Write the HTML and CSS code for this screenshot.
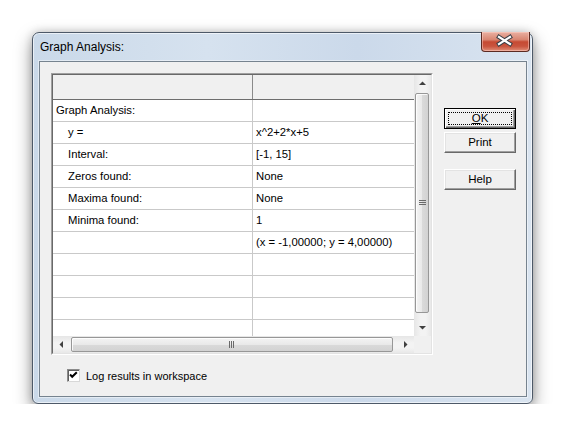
FILE: index.html
```html
<!DOCTYPE html>
<html>
<head>
<meta charset="utf-8">
<link rel="stylesheet" href="styles.css">
</head>
<body>
<div class="window">
  <div class="titlebar">
    <div class="title">Graph Analysis:</div>
    <div class="close">
      <svg width="49" height="20" viewBox="0 0 49 20">
        <path d="M18 6 L29 13 M29 6 L18 13" stroke="#3a3f46" stroke-width="4.2" stroke-linecap="square"/>
        <path d="M18 6 L29 13 M29 6 L18 13" stroke="#ffffff" stroke-width="2.2" stroke-linecap="square"/>
      </svg>
    </div>
  </div>
  <div class="client">
    <div class="listview">
      <div class="lv-inner">
        <div class="lv-body">
          <div class="hdr">
            <div class="hcell first"></div>
            <div class="hcell"></div>
          </div>
          <div class="row"><div class="cell c1">Graph Analysis:</div><div class="cell c2"></div></div>
          <div class="row"><div class="cell c1 ind">y =</div><div class="cell c2">x^2+2*x+5</div></div>
          <div class="row"><div class="cell c1 ind">Interval:</div><div class="cell c2">[-1, 15]</div></div>
          <div class="row"><div class="cell c1 ind">Zeros found:</div><div class="cell c2">None</div></div>
          <div class="row"><div class="cell c1 ind">Maxima found:</div><div class="cell c2">None</div></div>
          <div class="row"><div class="cell c1 ind">Minima found:</div><div class="cell c2">1</div></div>
          <div class="row"><div class="cell c1 ind"></div><div class="cell c2">(x = -1,00000; y = 4,00000)</div></div>
          <div class="row"><div class="cell c1"></div><div class="cell c2"></div></div>
          <div class="row"><div class="cell c1"></div><div class="cell c2"></div></div>
          <div class="row"><div class="cell c1"></div><div class="cell c2"></div></div>
          <div class="row"><div class="cell c1"></div><div class="cell c2"></div></div>
        </div>
        <div class="vscroll">
          <div class="arrow"><svg width="17" height="17" viewBox="0 0 17 17"><path d="M5 10 L12 10 L8.5 6.5 Z" fill="#404040"/></svg></div>
          <div class="vthumb">
            <svg width="7" height="6" viewBox="0 0 7 6"><path d="M0 0.5 H7 M0 2.5 H7 M0 4.5 H7" stroke="#6a6a6a" stroke-width="1"/></svg>
          </div>
          <div class="spacer"></div>
          <div class="arrow"><svg width="17" height="17" viewBox="0 0 17 17"><path d="M5 7 L12 7 L8.5 10.5 Z" fill="#404040"/></svg></div>
        </div>
        <div class="hscroll">
          <div class="arrow"><svg width="17" height="17" viewBox="0 0 17 17"><path d="M10 5 L10 12 L6.5 8.5 Z" fill="#404040"/></svg></div>
          <div class="hthumb">
            <svg width="6" height="7" viewBox="0 0 6 7"><path d="M0.5 0 V7 M2.5 0 V7 M4.5 0 V7" stroke="#6a6a6a" stroke-width="1"/></svg>
          </div>
          <div class="spacer"></div>
          <div class="arrow"><svg width="17" height="17" viewBox="0 0 17 17"><path d="M7 5 L7 12 L10.5 8.5 Z" fill="#404040"/></svg></div>
        </div>
        <div class="corner"></div>
      </div>
    </div>
    <div class="buttons">
      <div class="btn default"><span class="ul">O</span>K</div>
      <div class="btn print">Print</div>
      <div class="btn help">Help</div>
    </div>
    <div class="checkrow">
      <div class="checkbox">
        <svg width="11" height="11" viewBox="0 0 11 11"><path d="M2 4.5 L4.2 6.8 L8.8 2.2" fill="none" stroke="#000" stroke-width="2"/></svg>
      </div>
      <span>Log results in workspace</span>
    </div>
  </div>
</div>
</body>
</html>
```

FILE: styles.css
```css
* { box-sizing: border-box; }

body {
  margin: 0;
  background: #ffffff;
  font-family: "Liberation Sans", Arial, sans-serif;
  font-size: 11px;
  color: #000;
}

.window {
  margin: 32px 0 0 32px;
  width: 501px;
  height: 372px;
  display: flex;
  flex-direction: column;
  padding: 0 5px 6px 6px;
  border: 1px solid #4d5968;
  border-radius: 7px 7px 6px 6px;
  background: linear-gradient(90deg, #cad9e9 0%, #d6e2ef 35%, #cbd9ea 65%, #d9e4f0 100%);
  box-shadow: inset 0 0 0 1px rgba(255, 255, 255, 0.6), 0 7px 18px rgba(0, 0, 0, 0.4), 0 0 8px rgba(0, 0, 0, 0.18);
}

.titlebar {
  height: 28px;
  display: flex;
  justify-content: space-between;
  align-items: flex-start;
}

.title {
  font-size: 12px;
  line-height: 15px;
  padding: 7px 0 0 1px;
  color: #000;
}

.close {
  width: 49px;
  height: 20px;
  margin-top: -1px;
  margin-right: -3px;
  border: 1px solid #5b2a22;
  border-top: none;
  border-radius: 0 0 4px 4px;
  background: linear-gradient(180deg, #e9b0a2 0%, #d98672 40%, #c64a33 52%, #c9543e 75%, #e08f78 100%);
  box-shadow: inset 0 0 0 1px rgba(255, 210, 200, 0.5);
}

.close svg { display: block; margin: -1px 0 0 -1px; }

.client {
  flex: 1;
  background: #f0f0f0;
  border: 1px solid #76838f;
  box-shadow: 0 0 0 1px rgba(255, 255, 255, 0.45);
  padding: 11px 0 0 11px;
  display: grid;
  grid-template-columns: 382px 72px;
  column-gap: 11px;
  align-content: start;
}

.listview {
  height: 282px;
  border: 1px solid;
  border-color: #a0a0a0 #ffffff #ffffff #a0a0a0;
}

.lv-inner {
  height: 100%;
  border: 1px solid;
  border-color: #696969 #e3e3e3 #e3e3e3 #696969;
  display: grid;
  grid-template-columns: 1fr 17px;
  grid-template-rows: 1fr 17px;
  background: #fff;
}

.lv-body {
  overflow: hidden;
  background: #fff;
}

.hdr {
  display: grid;
  grid-template-columns: 200px 161px;
  height: 25px;
  border-bottom: 1px solid #6d6d6d;
  background: #f0f0f0;
}

.hcell.first { border-right: 1px solid #8a8a8a; }

.row {
  display: grid;
  grid-template-columns: 200px 161px;
  height: 22px;
  border-bottom: 1px solid #c9c9c9;
}

.cell {
  line-height: 21px;
  padding-left: 3px;
  white-space: nowrap;
  overflow: hidden;
  font-size: 11.3px;
}

.c1 { border-right: 1px solid #c9c9c9; }
.ind { padding-left: 15px; }

.vscroll {
  display: flex;
  flex-direction: column;
  background: linear-gradient(90deg, #e6e6e6 0%, #f3f3f3 40%, #f3f3f3 70%, #e8e8e8 100%);
}

.hscroll {
  display: flex;
  background: linear-gradient(180deg, #e6e6e6 0%, #f3f3f3 40%, #f3f3f3 70%, #e8e8e8 100%);
}

.arrow { width: 17px; height: 17px; flex: none; }
.arrow svg { display: block; }
.spacer { flex: 1; }

.vthumb {
  margin: 1px 0 0 1px;
  width: 14px;
  height: 220px;
  border: 1px solid #979797;
  border-radius: 2px;
  background: linear-gradient(90deg, #f4f4f4 0%, #e9e9e9 50%, #dadada 52%, #d2d2d2 100%);
  box-shadow: inset 1px 1px 0 rgba(255, 255, 255, 0.8);
  display: flex;
  align-items: center;
  justify-content: center;
}

.hthumb {
  margin: 1px 0 0 1px;
  width: 322px;
  height: 15px;
  border: 1px solid #979797;
  border-radius: 2px;
  background: linear-gradient(180deg, #f4f4f4 0%, #e9e9e9 50%, #dadada 52%, #d2d2d2 100%);
  box-shadow: inset 1px 1px 0 rgba(255, 255, 255, 0.8);
  display: flex;
  align-items: center;
  justify-content: center;
}

.vthumb svg, .hthumb svg { display: block; }

.corner { background: #f0f0f0; }

.buttons {
  display: flex;
  flex-direction: column;
  padding-top: 35px;
}

.btn {
  position: relative;
  height: 21px;
  line-height: 19px;
  text-align: center;
  background: #f0f0f0;
  border: 1px solid;
  border-color: #ffffff #696969 #696969 #ffffff;
  box-shadow: inset -1px -1px 0 #a0a0a0, inset 1px 1px 0 #e3e3e3;
  font-size: 11.5px;
}

.btn.default {
  border: 1px solid #000;
  box-shadow: inset 1px 1px 0 #ffffff, inset -1px -1px 0 #696969, inset -2px -2px 0 #a0a0a0;
}

.btn.default::after {
  content: "";
  position: absolute;
  left: 3px;
  right: 3px;
  top: 3px;
  bottom: 3px;
  border: 1px dotted #000;
}

.ul { text-decoration: underline; }

.print { margin-top: 3px; }
.help { margin-top: 16px; }

.checkrow {
  grid-column: 1 / -1;
  margin-top: 14px;
  padding-left: 16px;
  display: flex;
  align-items: center;
  gap: 6px;
  font-size: 11px;
}

.checkbox {
  width: 13px;
  height: 13px;
  border: 1px solid;
  border-color: #8a8a8a #d8d8d8 #d8d8d8 #8a8a8a;
  background: #fff;
  box-shadow: inset 1px 1px 0 #5f5f5f;
}

.checkbox svg { display: block; }
```
